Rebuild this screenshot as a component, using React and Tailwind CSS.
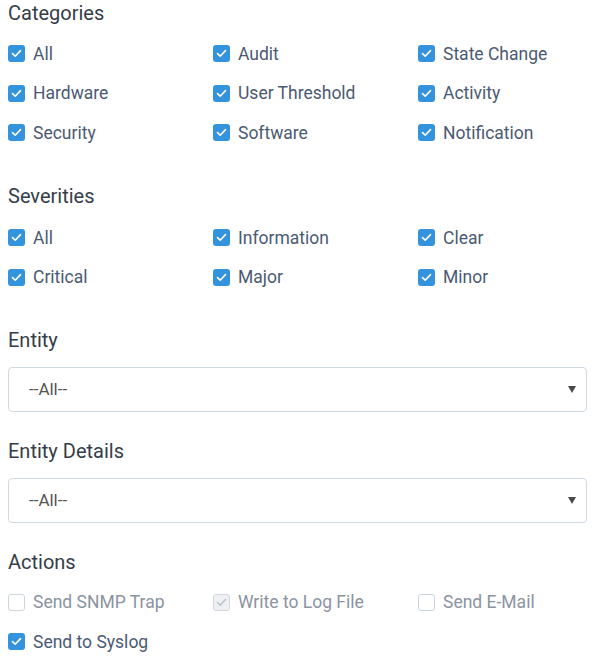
import React from "react";

function Box({ checked, disabled }) {
  if (disabled) {
    return (
      <span className="flex h-[17px] w-[17px] shrink-0 items-center justify-center rounded-[3px] border border-[#d3d8df] bg-[#eef0f4]">
        {checked && (
          <svg width="11" height="9" viewBox="0 0 11 9" fill="none">
            <path d="M1.5 4.6 L4.2 7.2 L9.5 1.6" stroke="#b9bfc8" strokeWidth="1.4" strokeLinecap="round" strokeLinejoin="round" />
          </svg>
        )}
      </span>
    );
  }
  if (checked) {
    return (
      <span className="flex h-[17px] w-[17px] shrink-0 items-center justify-center rounded-[3px] bg-[#3393dc]">
        <svg width="11" height="9" viewBox="0 0 11 9" fill="none">
          <path d="M1.5 4.6 L4.2 7.2 L9.5 1.6" stroke="#ffffff" strokeWidth="1.6" strokeLinecap="round" strokeLinejoin="round" />
        </svg>
      </span>
    );
  }
  return <span className="h-[17px] w-[17px] shrink-0 rounded-[3px] border border-[#cbd5e0] bg-white" />;
}

function Item({ label, checked = true, disabled = false, muted = false }) {
  return (
    <div className="flex h-[39.5px] items-center gap-[8px]">
      <Box checked={checked} disabled={disabled} />
      <span className={`text-[17.5px] ${muted ? "text-[#8b93a1]" : "text-[#4b5a73]"}`}>{label}</span>
    </div>
  );
}

function Heading({ children, className = "" }) {
  return (
    <div className={`text-[20px] leading-[27px] text-[#343d48] ${className}`}>{children}</div>
  );
}

function Grid({ children }) {
  return <div className="grid grid-cols-[205px_205px_1fr]">{children}</div>;
}

function Select() {
  return (
    <div className="flex h-[45px] items-center justify-between rounded-[4px] border border-[#cfd9e2] bg-white pl-[20px] pr-[10px]">
      <span className="text-[17px] text-[#555555]">--All--</span>
      <svg width="8" height="7" viewBox="0 0 8 7">
        <path d="M0 0 L8 0 L4 7 Z" fill="#4a4a4a" />
      </svg>
    </div>
  );
}

export default function App() {
  return (
    <div className="min-h-[664px] bg-white px-[8px] pt-0" style={{ fontFamily: "Roboto, 'Liberation Sans', sans-serif" }}>
      <Heading className="h-[34px]">Categories</Heading>
      <Grid>
        <Item label="All" />
        <Item label="Audit" />
        <Item label="State Change" />
        <Item label="Hardware" />
        <Item label="User Threshold" />
        <Item label="Activity" />
        <Item label="Security" />
        <Item label="Software" />
        <Item label="Notification" />
      </Grid>

      <Heading className="mt-[30.5px] h-[35px]">Severities</Heading>
      <Grid>
        <Item label="All" />
        <Item label="Information" />
        <Item label="Clear" />
        <Item label="Critical" />
        <Item label="Major" />
        <Item label="Minor" />
      </Grid>

      <Heading className="mt-[29.5px] h-[40.5px]">Entity</Heading>
      <Select />

      <Heading className="mt-[25.5px] h-[40.5px]">Entity Details</Heading>
      <Select />

      <Heading className="mt-[25.5px] h-[34px]">Actions</Heading>
      <Grid>
        <Item label="Send SNMP Trap" checked={false} muted />
        <Item label="Write to Log File" checked disabled muted />
        <Item label="Send E-Mail" checked={false} muted />
        <Item label="Send to Syslog" />
      </Grid>
    </div>
  );
}
